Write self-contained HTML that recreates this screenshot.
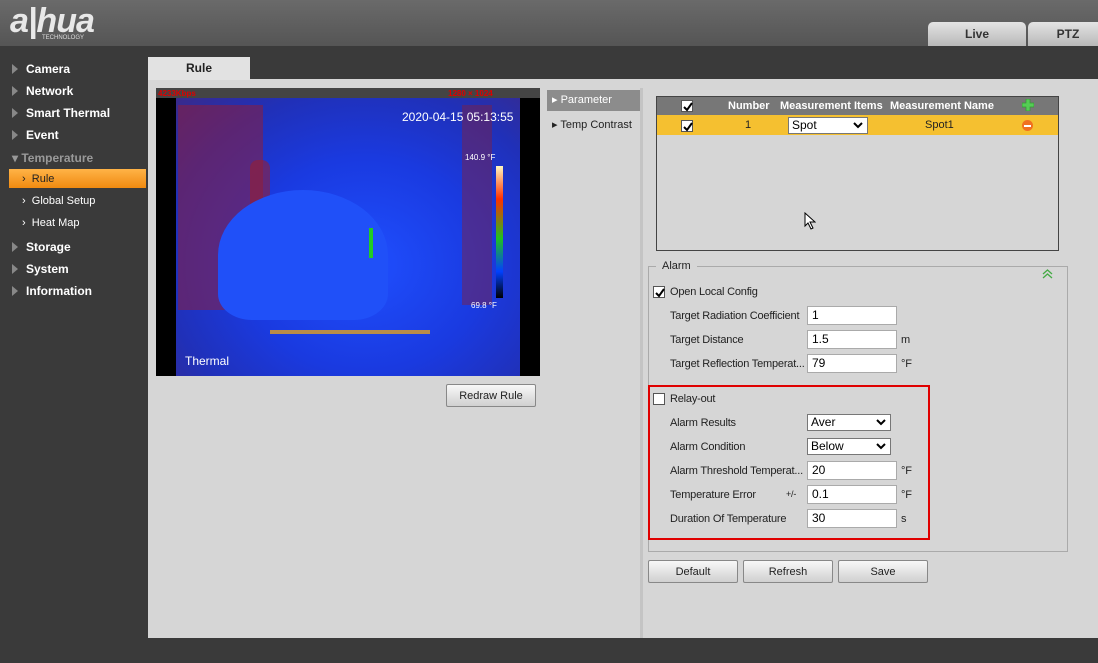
<!DOCTYPE html>
<html><head><meta charset="utf-8"><style>
*{margin:0;padding:0;box-sizing:border-box}
body{width:1098px;height:663px;overflow:hidden;background:#3a3a3a;font-family:"Liberation Sans",Arial,sans-serif;position:relative}
.a{position:absolute}
.hdr{left:0;top:0;width:1098px;height:46px;background:linear-gradient(#6a6a6a,#555)}
.tab{top:22px;height:24px;background:linear-gradient(#e4e4e4,#b8b8b8);border-radius:5px 5px 0 0;font-weight:bold;font-size:12px;color:#333;text-align:center;line-height:24px}
.nav{left:12px;font-size:12px;font-weight:bold;color:#fff}
.nav:before{content:"";display:inline-block;border-left:6px solid #888;border-top:5px solid transparent;border-bottom:5px solid transparent;margin-right:8px;vertical-align:-1px}
.sub{left:22px;font-size:11px;color:#fff}
.content{left:148px;top:79px;width:950px;height:559px;background:#d6d6d6}
.lbl{font-size:11px;color:#222;letter-spacing:-0.2px}
.inp{background:#fff;border:1px solid #aaa;height:19px;font-size:12px;padding-left:4px;line-height:17px;color:#000}
.sel{background:#fff;border:1px solid #777;height:17px;font-size:12px;padding-left:3px;line-height:15px}
.sel svg{position:absolute;right:4px;top:4px}
.cb{width:12px;height:12px;background:#fff;border:1px solid #555}
.ck{position:absolute;left:1px;top:1px}
.btn{height:23px;background:linear-gradient(#f8f8f8,#d0d0d0);border:1px solid #888;border-radius:2px;font-size:11px;text-align:center;line-height:21px;padding-top:1px;color:#222}
</style></head><body>
<div class="a hdr"></div>
<div class="a" style="left:10px;top:2px;font-size:34px;font-weight:bold;font-style:italic;color:#e8e8e8;letter-spacing:-1px">a|hua</div>
<div class="a" style="left:42px;top:35px;font-size:6px;color:#ddd">TECHNOLOGY</div>
<div class="a tab" style="left:928px;width:98px">Live</div>
<div class="a tab" style="left:1028px;width:80px">PTZ</div>

<div class="a nav" style="top:62px">Camera</div>
<div class="a nav" style="top:84px">Network</div>
<div class="a nav" style="top:106px">Smart Thermal</div>
<div class="a nav" style="top:128px">Event</div>
<div class="a" style="left:12px;top:151px;font-size:12px;font-weight:bold;color:#999">▾ Temperature</div>
<div class="a" style="left:9px;top:169px;width:137px;height:19px;background:linear-gradient(#ffb347,#f08a10)"></div>
<div class="a sub" style="top:173px;color:#222">›&nbsp; Rule</div>
<div class="a sub" style="top:195px">›&nbsp; Global Setup</div>
<div class="a sub" style="top:217px">›&nbsp; Heat Map</div>
<div class="a nav" style="top:240px">Storage</div>
<div class="a nav" style="top:262px">System</div>
<div class="a nav" style="top:284px">Information</div>

<div class="a content"></div>
<div class="a" style="left:148px;top:57px;width:102px;height:23px;background:#e2e2e2;font-size:12px;font-weight:bold;text-align:center;line-height:23px;color:#222">Rule</div>

<div class="a" style="left:156px;top:88px;width:384px;height:288px;background:#000"></div>
<div class="a" style="left:156px;top:88px;width:384px;height:10px;background:#444"></div>
<div class="a" style="left:158px;top:89px;font-size:8px;color:#d00;font-weight:bold">4233Kbps</div>
<div class="a" style="left:448px;top:89px;font-size:8px;color:#d00;font-weight:bold">1280 × 1024</div>
<div class="a" style="left:176px;top:98px;width:344px;height:278px;background:radial-gradient(ellipse at 55% 60%,#1f4fff 0%,#1a3ae0 45%,#2030b8 75%,#3a2a8a 100%)"></div>
<div class="a" style="left:178px;top:105px;width:85px;height:205px;background:rgba(140,30,60,.55)"></div>
<div class="a" style="left:250px;top:160px;width:20px;height:90px;background:rgba(150,30,50,.6);border-radius:8px"></div>
<div class="a" style="left:218px;top:190px;width:170px;height:130px;background:#2050f8;border-radius:50% 50% 20% 20%"></div>
<div class="a" style="left:462px;top:105px;width:30px;height:200px;background:rgba(130,30,60,.45)"></div>
<div class="a" style="left:270px;top:330px;width:160px;height:4px;background:#e0a020;opacity:.8"></div>
<div class="a" style="left:369px;top:228px;width:4px;height:30px;background:#2c2"></div>
<div class="a" style="left:402px;top:110px;font-size:12px;color:#fff">2020-04-15 05:13:55</div>
<div class="a" style="left:465px;top:153px;font-size:8px;color:#fff">140.9 °F</div>
<div class="a" style="left:496px;top:166px;width:7px;height:132px;background:linear-gradient(#fff8c0,#ff3000 25%,#20c020 55%,#0040ff 80%,#000)"></div>
<div class="a" style="left:471px;top:301px;font-size:8px;color:#fff">69.8 °F</div>
<div class="a" style="left:185px;top:354px;font-size:12px;color:#fff">Thermal</div>
<div class="a btn" style="left:446px;top:384px;width:90px">Redraw Rule</div>

<div class="a" style="left:640px;top:88px;width:3px;height:550px;background:#c4c4c4"></div>
<div class="a" style="left:547px;top:90px;width:93px;height:21px;background:#8c8c8c;color:#fff;font-size:11px;line-height:21px;padding-left:5px">▸ Parameter</div>
<div class="a" style="left:552px;top:118px;font-size:11px;color:#222">▸ Temp Contrast</div>

<div class="a" style="left:656px;top:96px;width:403px;height:155px;border:1px solid #444;background:#d6d6d6"></div>
<div class="a" style="left:657px;top:97px;width:401px;height:18px;background:#777"></div>
<div class="a" style="left:657px;top:115px;width:401px;height:20px;background:#f5c030"></div>
<div class="a cb" style="left:681px;top:100px"><svg class="ck" width="10" height="10"><path d="M1 5l3 3 5-7" stroke="#000" stroke-width="2" fill="none"/></svg></div>
<div class="a" style="left:728px;top:100px;font-size:11px;font-weight:bold;color:#fff">Number</div>
<div class="a" style="left:780px;top:100px;font-size:11px;font-weight:bold;color:#fff">Measurement Items</div>
<div class="a" style="left:890px;top:100px;font-size:11px;font-weight:bold;color:#fff">Measurement Name</div>
<svg class="a" style="left:1022px;top:99px" width="12" height="12"><path d="M4 0h4v4h4v4h-4v4h-4v-4h-4v-4h4z" fill="#5c5" stroke="#393" stroke-width=".7"/></svg>
<div class="a cb" style="left:681px;top:120px"><svg class="ck" width="10" height="10"><path d="M1 5l3 3 5-7" stroke="#000" stroke-width="2" fill="none"/></svg></div>
<div class="a" style="left:745px;top:119px;font-size:11px;color:#222">1</div>
<div class="a sel" style="left:788px;top:117px;width:80px">Spot<svg width="10" height="7"><path d="M1 1l4 4 4-4" stroke="#000" stroke-width="2" fill="none"/></svg></div>
<div class="a" style="left:925px;top:119px;font-size:11px;color:#222">Spot1</div>
<div class="a" style="left:1022px;top:120px;width:11px;height:11px;border-radius:50%;background:#f07020"></div>
<div class="a" style="left:1024px;top:125px;width:7px;height:2px;background:#fff"></div>

<div class="a" style="left:648px;top:266px;width:420px;height:286px;border:1px solid #aaa"></div>
<div class="a" style="left:656px;top:260px;padding:0 6px;background:#d6d6d6;font-size:11px;color:#222">Alarm</div>
<svg class="a" style="left:1042px;top:269px" width="11" height="10"><path d="M1 5l4.5-4 4.5 4M1 9l4.5-4 4.5 4" stroke="#4a4" stroke-width="1.3" fill="none"/></svg>

<div class="a cb" style="left:653px;top:286px"><svg class="ck" width="10" height="10"><path d="M1 5l3 3 5-7" stroke="#000" stroke-width="2" fill="none"/></svg></div>
<div class="a lbl" style="left:670px;top:286px">Open Local Config</div>
<div class="a lbl" style="left:670px;top:310px">Target Radiation Coefficient</div>
<div class="a inp" style="left:807px;top:306px;width:90px">1</div>
<div class="a lbl" style="left:670px;top:334px">Target Distance</div>
<div class="a inp" style="left:807px;top:330px;width:90px">1.5</div><div class="a lbl" style="left:901px;top:334px">m</div>
<div class="a lbl" style="left:670px;top:358px">Target Reflection Temperat...</div>
<div class="a inp" style="left:807px;top:354px;width:90px">79</div><div class="a lbl" style="left:901px;top:358px">°F</div>

<div class="a" style="left:648px;top:385px;width:282px;height:155px;border:2px solid #e00000"></div>
<div class="a cb" style="left:653px;top:393px"></div>
<div class="a lbl" style="left:670px;top:393px">Relay-out</div>
<div class="a lbl" style="left:670px;top:417px">Alarm Results</div>
<div class="a sel" style="left:807px;top:414px;width:84px">Aver<svg width="10" height="7"><path d="M1 1l4 4 4-4" stroke="#000" stroke-width="2" fill="none"/></svg></div>
<div class="a lbl" style="left:670px;top:441px">Alarm Condition</div>
<div class="a sel" style="left:807px;top:438px;width:84px">Below<svg width="10" height="7"><path d="M1 1l4 4 4-4" stroke="#000" stroke-width="2" fill="none"/></svg></div>
<div class="a lbl" style="left:670px;top:465px">Alarm Threshold Temperat...</div>
<div class="a inp" style="left:807px;top:461px;width:90px">20</div><div class="a lbl" style="left:901px;top:465px">°F</div>
<div class="a lbl" style="left:670px;top:489px">Temperature Error</div><div class="a lbl" style="left:786px;top:489px;font-size:9px">+/-</div>
<div class="a inp" style="left:807px;top:485px;width:90px">0.1</div><div class="a lbl" style="left:901px;top:489px">°F</div>
<div class="a lbl" style="left:670px;top:513px">Duration Of Temperature</div>
<div class="a inp" style="left:807px;top:509px;width:90px">30</div><div class="a lbl" style="left:901px;top:513px">s</div>

<div class="a btn" style="left:648px;top:560px;width:90px">Default</div>
<div class="a btn" style="left:743px;top:560px;width:90px">Refresh</div>
<div class="a btn" style="left:838px;top:560px;width:90px">Save</div>

<svg class="a" style="left:804px;top:212px" width="12" height="18"><path d="M1 1v13l3-3 3 6 2-1-3-6h5z" fill="#fff" stroke="#000"/></svg>
</body></html>
